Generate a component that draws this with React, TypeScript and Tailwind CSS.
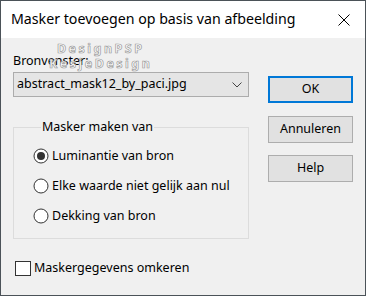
import React from "react";

function Radio({ checked }: { checked?: boolean }) {
  return (
    <svg width="16" height="16" viewBox="0 0 16 16" className="shrink-0">
      <circle cx="8" cy="8" r="7" fill="#fff" stroke="#333" strokeWidth="1" />
      {checked && <circle cx="8" cy="8" r="4" fill="#333" />}
    </svg>
  );
}

const options = [
  { label: "Luminantie van bron", checked: true },
  { label: "Elke waarde niet gelijk aan nul", checked: false },
  { label: "Dekking van bron", checked: false },
];

export default function App() {
  return (
    <div className="w-[366px] h-[296px] border border-[#4b5258] flex flex-col font-['Noto_Sans',sans-serif] text-[12.5px] text-black">
      <div className="h-[37px] shrink-0 bg-white flex items-center justify-between pl-[10px] pr-[15px]">
        <span className="text-[14.2px] leading-none">Masker toevoegen op basis van afbeelding</span>
        <svg width="12" height="12" viewBox="0 0 12 12">
          <path d="M0.5 0.5 L11.5 11.5 M11.5 0.5 L0.5 11.5" stroke="#000" strokeWidth="1" />
        </svg>
      </div>

      <div className="flex-1 bg-[#f0f0f0] relative flex pl-[12px]">
        <div className="w-[236px] pt-[15px] flex flex-col">
          <div className="h-[16px] leading-[16px]">Bronvenster:</div>
          <div className="mt-[3px] h-[25px] bg-[#e5e5e5] border border-[#acacac] flex items-center justify-between pl-[3px] pr-[6px]">
            <span>abstract_mask12_by_paci.jpg</span>
            <svg width="10" height="6" viewBox="0 0 10 6">
              <path d="M0.5 0.5 L5 5 L9.5 0.5" fill="none" stroke="#444" strokeWidth="1" />
            </svg>
          </div>

          <fieldset className="mt-[22px] h-[120px] border border-[#dcdcdc] pl-[19px] pb-[10px]">
            <legend className="ml-[8px] px-[1px] h-[16px] leading-[16px]">Masker maken van</legend>
            <div className="mt-[11px] flex flex-col gap-[10px]">
              {options.map((o) => (
                <div key={o.label} className="h-[20px] flex items-center gap-[3px]">
                  <Radio checked={o.checked} />
                  <span>{o.label}</span>
                </div>
              ))}
            </div>
          </fieldset>

          <div className="mt-[19px] ml-[2px] h-[20px] flex items-center gap-[3px]">
            <div className="w-[16px] h-[15px] bg-white border border-[#333]" />
            <span>Maskergegevens omkeren</span>
          </div>
        </div>

        <div className="ml-[19px] w-[85px] pt-[38px] flex flex-col">
          <button className="h-[27px] bg-[#e1e1e1] border-2 border-[#0078d7]">OK</button>
          <button className="mt-[13px] h-[27px] bg-[#e1e1e1] border border-[#adadad]">Annuleren</button>
          <button className="mt-[12px] h-[27px] bg-[#e1e1e1] border border-[#adadad]">Help</button>
        </div>

        <div className="absolute left-[48px] top-[3px] flex flex-col items-center font-bold text-[12.5px] leading-[15px] tracking-[2.5px] text-white [-webkit-text-stroke:0.7px_#9a9a9a] pointer-events-none">
          <span>DesignPSP</span>
          <span>KesjeDesign</span>
        </div>
      </div>
    </div>
  );
}
